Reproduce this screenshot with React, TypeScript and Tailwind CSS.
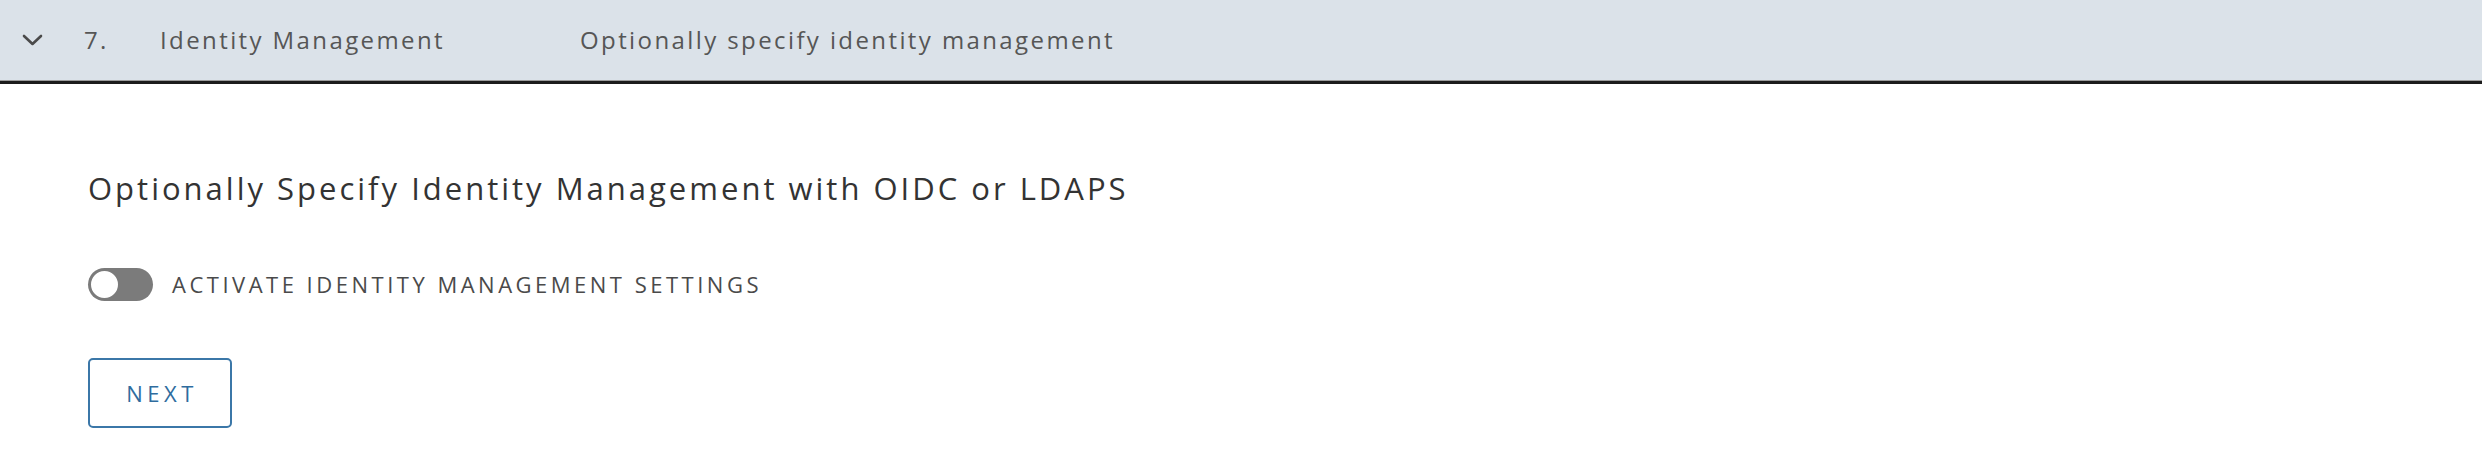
export default function App() {
  return (
    <div className="min-h-[472px] w-full bg-white" style={{ fontFamily: '"Open Sans", "Liberation Sans", sans-serif' }}>
      {/* Step header */}
      <div className="flex h-[80px] items-center bg-[#dbe2e9] text-[24px] tracking-[2.4px] text-[#565656]">
        <div className="flex w-[84px] items-center pl-[22px]">
          <svg width="21" height="12" viewBox="0 0 21 12" fill="none">
            <path d="M2 2 L10.5 10 L19 2" stroke="#4a4a4a" strokeWidth="2.6" strokeLinecap="round" strokeLinejoin="round" />
          </svg>
        </div>
        <div className="w-[76px]">7.</div>
        <div className="w-[420px]">Identity Management</div>
        <div>Optionally specify identity management</div>
      </div>
      <div className="h-px bg-[#9c9c9c]" />
      <div className="h-[3px] bg-[#1c1c1c]" />

      {/* Step body */}
      <div className="flex flex-col items-start pl-[88px]">
        <h2 className="mt-[84px] text-[31px] leading-[40px] tracking-[3px] text-[#333333]">
          Optionally Specify Identity Management with OIDC or LDAPS
        </h2>

        <label className="mt-[60px] flex items-center gap-[19px]">
          <span className="flex h-[33px] w-[65px] items-center rounded-full bg-[#7b7b7b] px-[1px]">
            <span className="h-[31px] w-[31px] rounded-full border-2 border-[#7b7b7b] bg-white" />
          </span>
          <span className="text-[22px] tracking-[3.5px] text-[#4a4a4a]">ACTIVATE IDENTITY MANAGEMENT SETTINGS</span>
        </label>

        <button className="mt-[57px] flex h-[70px] w-[144px] items-center justify-center rounded-[5px] border-2 border-[#3b77a8] pl-[4px] text-[22px] tracking-[4.5px] text-[#2f6c9e]">
          NEXT
        </button>
      </div>
    </div>
  );
}
